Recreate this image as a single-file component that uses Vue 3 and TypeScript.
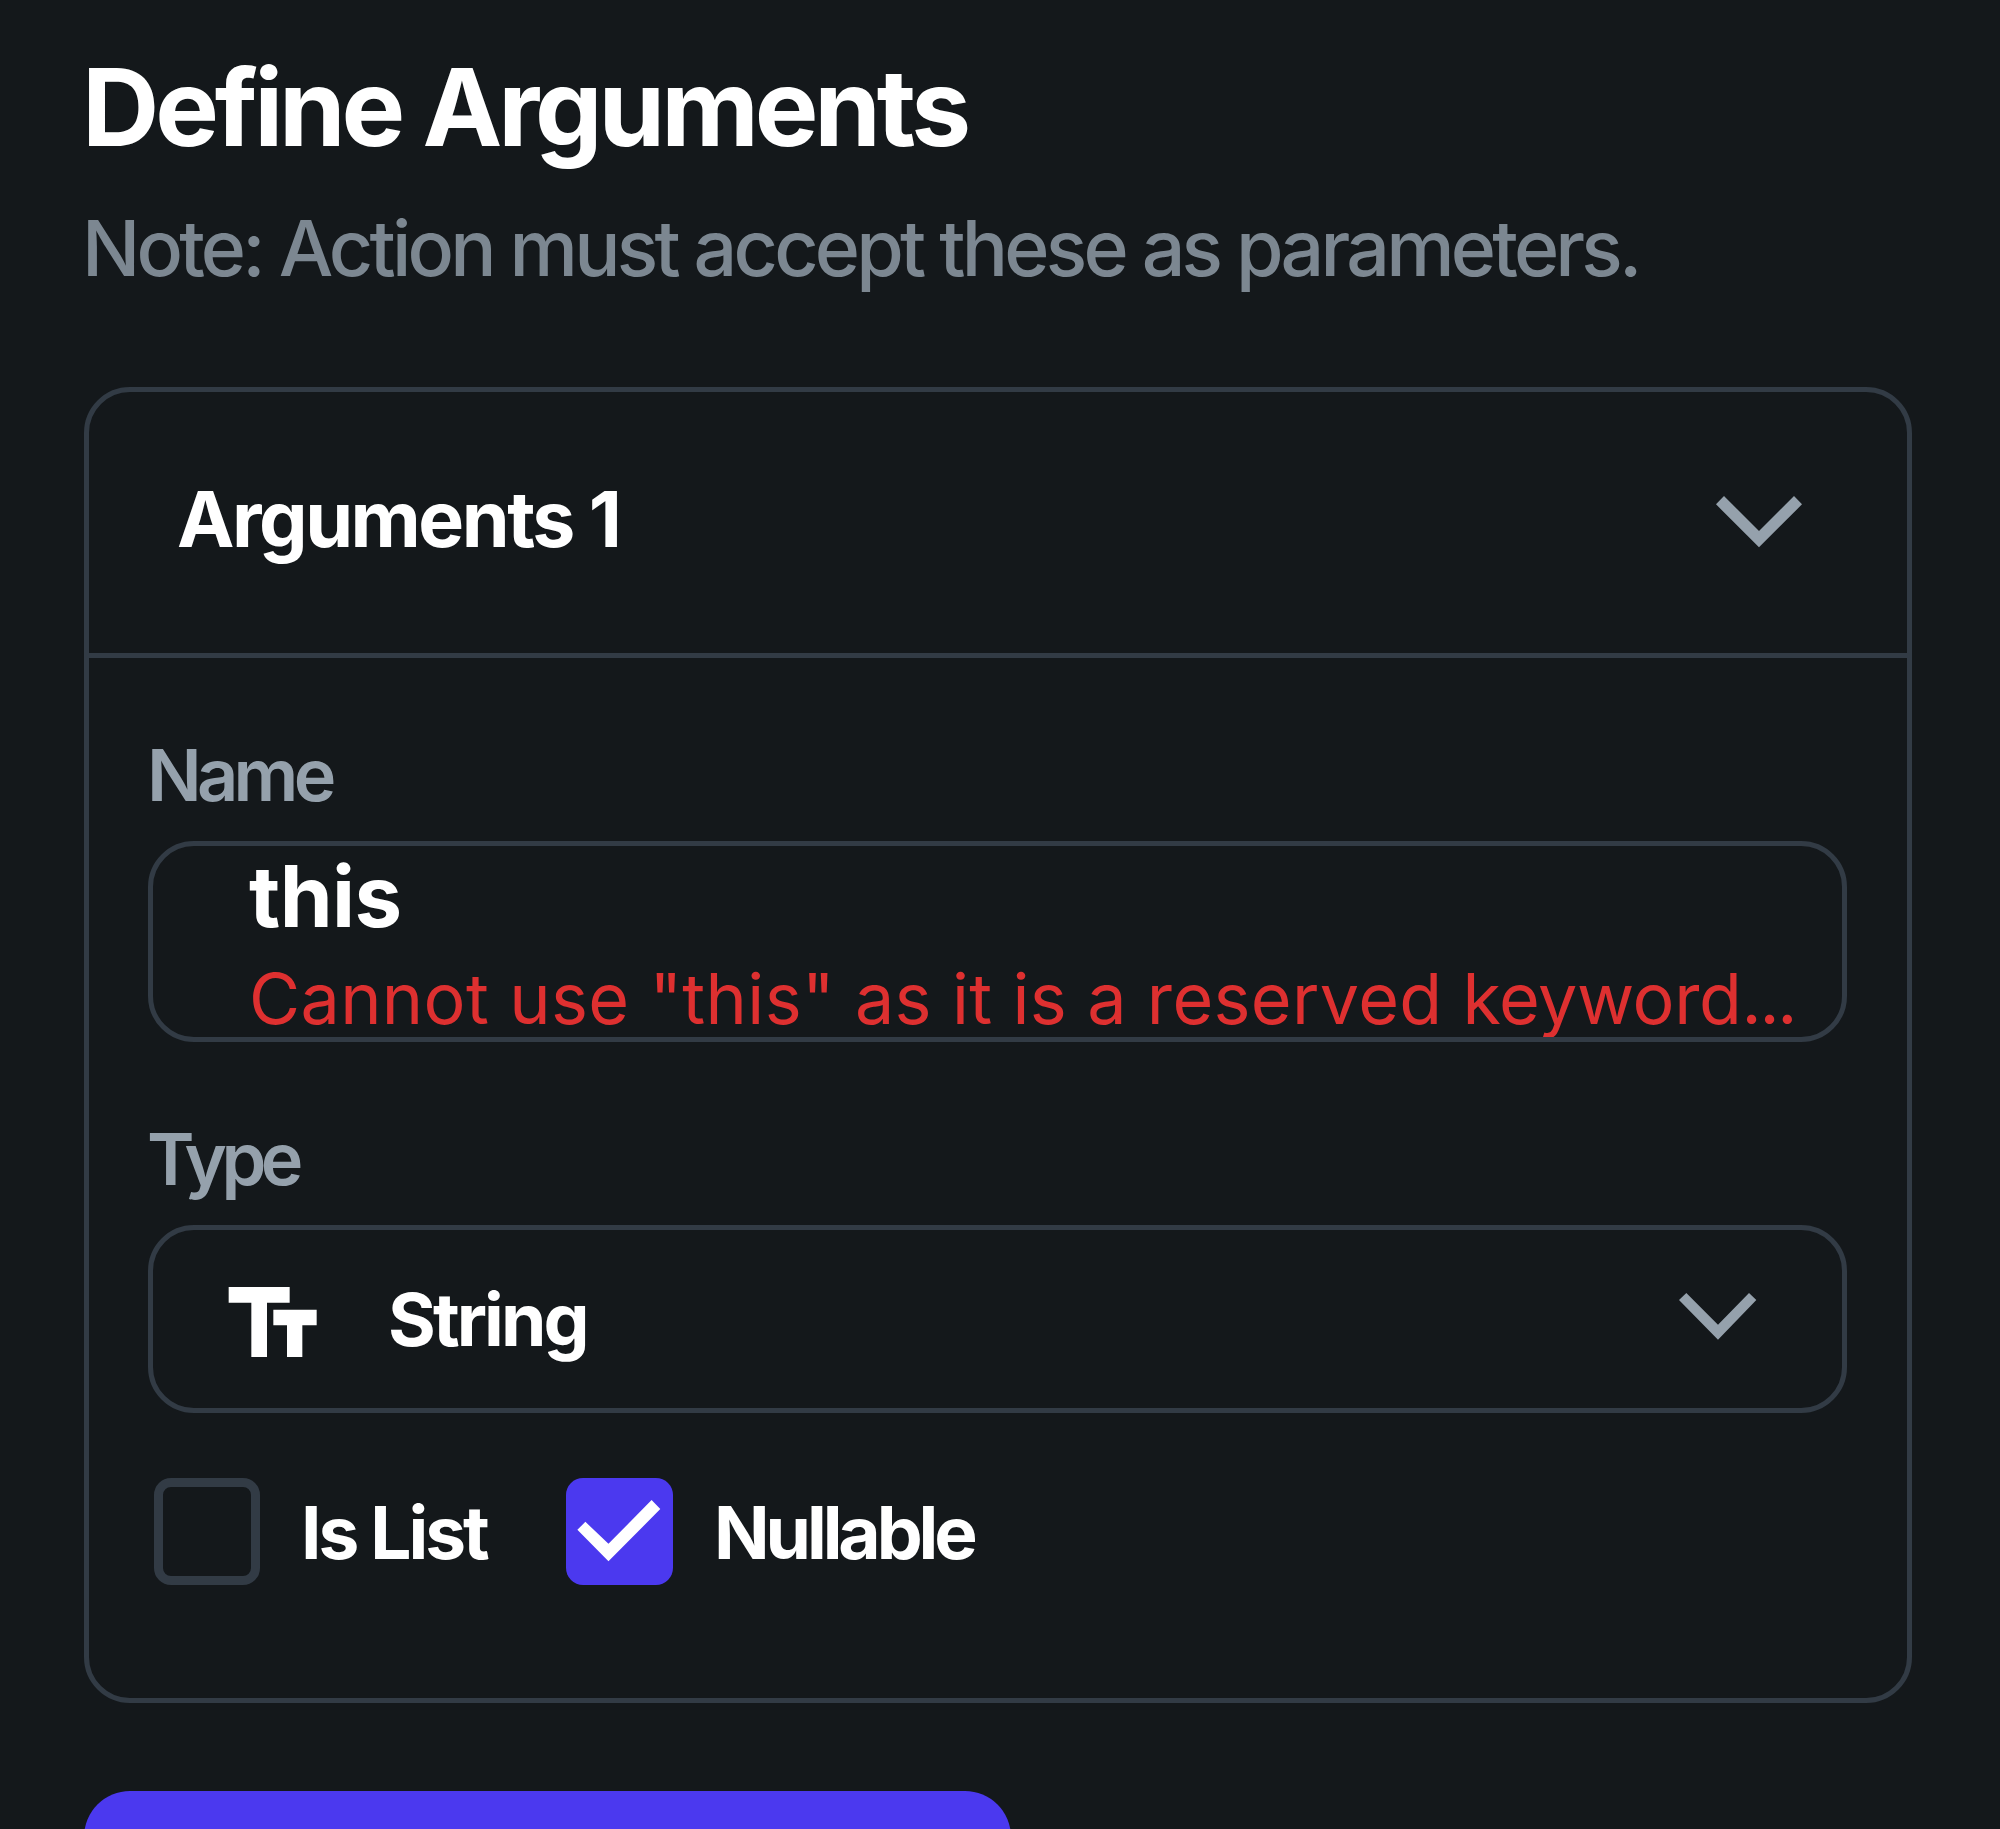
<script setup lang="ts">
import { ref } from 'vue'

interface Flag {
  label: string
  checked: boolean
  key: string
}

const argName = ref('this')
const flags = ref<Flag[]>([
  { label: 'Is List', checked: false, key: 'list' },
  { label: 'Nullable', checked: true, key: 'nullable' },
])
</script>

<template>
  <main class="panel">
    <h1 class="title">Define Arguments</h1>
    <p class="note">Note: Action must accept these as parameters.</p>

    <section class="card">
      <header class="card-head">
        <h2 class="card-title">Arguments 1</h2>
        <svg class="chevron" width="86" height="52" viewBox="0 0 258 156">
          <path d="M0 25 24 0 129 105 234 0 258 25 129 154Z" />
        </svg>
      </header>

      <div class="card-body">
        <div class="label">Name</div>
        <div class="field name-field">
          <div class="value">{{ argName }}</div>
          <div class="error">Cannot use "{{ argName }}" as it is a reserved <span class="tail">keyword<span class="dots">...</span></span></div>
        </div>

        <div class="label type-label">Type</div>
        <div class="field select">
          <svg class="type-icon" width="89" height="70" viewBox="0 0 267 210">
            <path d="M2 0H185V47H117V210H70V47H2ZM136 68H266V115H223V210H177V115H136Z" />
          </svg>
          <span class="select-value">String</span>
          <svg class="chevron" width="78" height="47" viewBox="0 0 234 141">
            <path d="M0 21 22 0 117 95 210 0 232 21 117 140Z" />
          </svg>
        </div>

        <div class="flags">
          <label
            v-for="flag in flags"
            :key="flag.key"
            class="flag"
            @click="flag.checked = !flag.checked"
          >
            <span class="box" :class="{ on: flag.checked }">
              <svg v-if="flag.checked" width="107" height="107" viewBox="0 0 320 320">
                <path d="M34 155 58 131 127 197 256 66 282 93 127 249Z" />
              </svg>
            </span>
            <span class="flag-label" :class="flag.key">{{ flag.label }}</span>
          </label>
        </div>
      </div>
    </section>

    <button class="action" type="button" aria-label="Add argument"></button>
  </main>
</template>

<style>
body {
  margin: 0;
  background: #14181b;
}
</style>

<style scoped>
.panel {
  box-sizing: border-box;
  width: 2000px;
  height: 1829px;
  overflow: hidden;
  padding: 47px 88px 0 84px;
  background: #14181b;
  color: #fff;
  font-family: Inter, sans-serif;
  white-space: nowrap;
}
.title {
  margin: 0 0 36px -2px;
  font-size: 107px;
  line-height: 120px;
  font-weight: 700;
  letter-spacing: -4.1px;
}
.note {
  margin: 0 0 94px -2px;
  font-size: 77px;
  line-height: 90px;
  font-weight: 500;
  letter-spacing: -3.78px;
  color: #7c8791;
}
.card {
  box-sizing: border-box;
  height: 1316px;
  border: 5px solid #323b45;
  border-radius: 46px;
}
.card-head {
  box-sizing: border-box;
  height: 266px;
  padding: 0 105px 0 88px;
  display: flex;
  align-items: center;
  justify-content: space-between;
  border-bottom: 5px solid #323b45;
}
.card-title {
  margin: 0 0 7px;
  font-size: 77px;
  line-height: 90px;
  font-weight: 700;
  letter-spacing: -2.49px;
}
.chevron {
  flex: none;
  fill: #95a1ac;
}
.card-head .chevron {
  margin-bottom: 2px;
}
.card-body {
  padding: 77px 60px 0 59px;
}
.label {
  margin: 0 0 26px -1px;
  font-size: 72px;
  line-height: 80px;
  font-weight: 600;
  letter-spacing: -4.71px;
  color: #95a1ac;
}
.type-label {
  margin-top: 77px;
  letter-spacing: -5.5px;
}
.field {
  box-sizing: border-box;
  border: 5px solid #323b45;
  border-radius: 46px;
}
.name-field {
  height: 201px;
  padding: 3px 0 0 96px;
  overflow: hidden;
}
.value {
  font-size: 85px;
  line-height: 96px;
  font-weight: 700;
  letter-spacing: -0.6px;
}
.error {
  margin-top: 14px;
  font-size: 70px;
  line-height: 80px;
  letter-spacing: 0.35px;
  color: #de3030;
}
.tail {
  letter-spacing: -0.4px;
}
.dots {
  letter-spacing: -2.2px;
}
.select {
  height: 188px;
  padding: 0 85px 0 75px;
  display: flex;
  align-items: center;
}
.select .chevron {
  margin-bottom: 5px;
}
.type-icon {
  flex: none;
  margin: 5px 71px 0 0;
  fill: #fff;
}
.select-value {
  flex: 1;
  margin-top: 2px;
  font-size: 73px;
  line-height: 80px;
  font-weight: 700;
  letter-spacing: -2.9px;
}
.flags {
  display: flex;
  margin: 65px 0 0 6px;
}
.flag {
  display: flex;
  align-items: center;
  width: 412px;
}
.box {
  box-sizing: border-box;
  flex: none;
  width: 106px;
  height: 107px;
  margin-right: 41px;
  border: 9px solid #323b45;
  border-radius: 17px;
}
.box.on {
  width: 107px;
  border: 0;
  background: #4b39ef;
}
.box svg {
  display: block;
  fill: #fff;
}
.flag-label {
  margin-top: 3px;
  font-size: 73px;
  line-height: 80px;
  font-weight: 700;
}
.list {
  letter-spacing: -3.1px;
}
.nullable {
  letter-spacing: -4.08px;
}
.action {
  display: block;
  width: 927px;
  height: 140px;
  margin: 88px 0 0;
  padding: 0;
  border: 0;
  border-radius: 46px;
  background: #4b39ef;
}
</style>
